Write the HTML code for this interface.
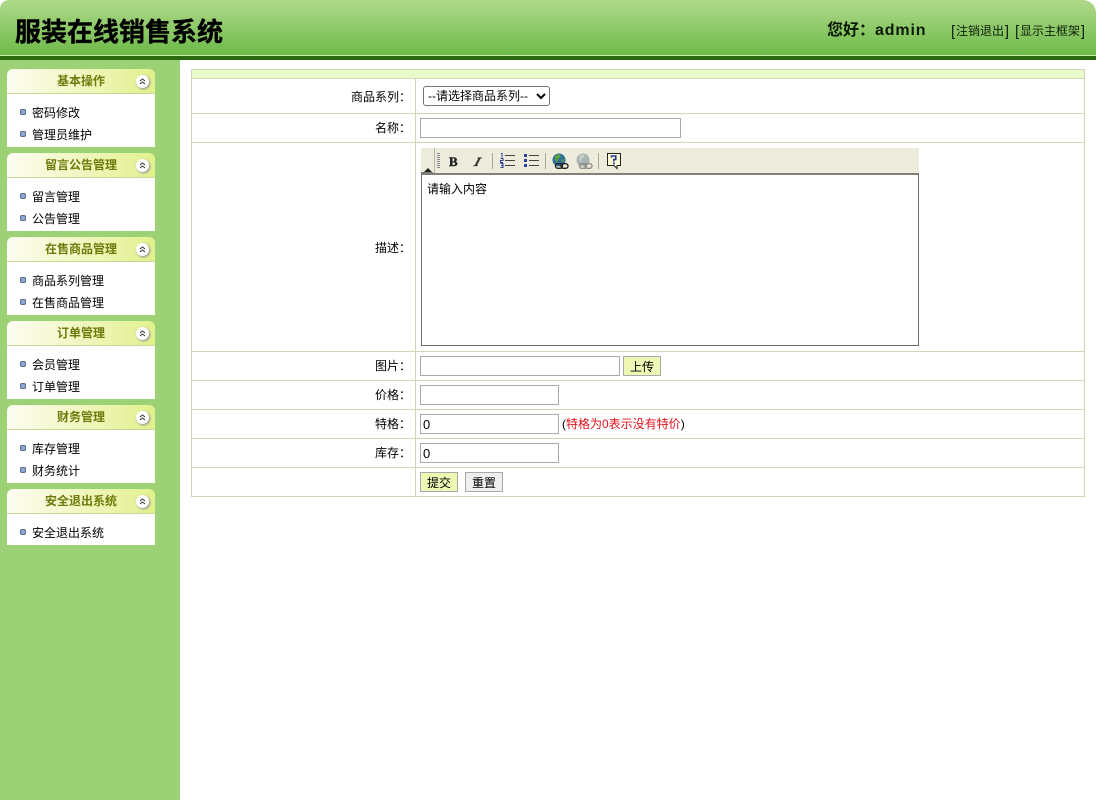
<!DOCTYPE html>
<html>
<head>
<meta charset="utf-8">
<style>
html,body{margin:0;padding:0;width:1096px;height:800px;overflow:hidden;background:#fff;font-family:"Liberation Sans","Noto Sans CJK SC",sans-serif;font-size:12px;color:#000}
div,span,input,select,button{box-sizing:border-box}
.a{position:absolute;white-space:nowrap}
#head{position:absolute;left:0;top:0;width:1096px;height:55px;background:linear-gradient(#b0d98a,#6dba49);border-radius:9px 13px 0 0}
#sb{position:absolute;left:0;top:60px;width:180px;height:740px;background:#9cd175}
.ph{position:absolute;left:7px;width:148px;height:25px;background:linear-gradient(90deg,#fdfdf2,#e2f08c);border-radius:6px 6px 0 0;border-bottom:1px solid #c9d69a;text-align:center;font-weight:bold;font-size:12px;line-height:25px;color:#6f7a0c}
.ph span{position:absolute;left:0;right:0;top:0}
.ph i{position:absolute;left:129px;top:6px;width:13px;height:13px;border-radius:50%;background:#fff;box-shadow:1px 1px 2px #889}
.ph svg{position:absolute;left:132px;top:9px}
.pb{position:absolute;left:7px;width:148px;background:#fff}
.it{position:absolute;left:32px;font-size:12px;line-height:16px;white-space:nowrap}
.bu{position:absolute;left:20px;width:6px;height:6px;background:#8ea8d8;border:1px solid #566a8a;border-radius:2px}
.h{position:absolute;left:191px;width:894px;height:1px;background:#d2d6b4}
.v{position:absolute;width:1px;background:#d2d6b4}
.lb{position:absolute;left:192px;width:219px;text-align:right;font-size:12px;line-height:16px}
input.t{position:absolute;height:20px;border:1px solid #a9a9a9;background:#fff;font:13px "Liberation Sans",sans-serif;padding:1px 2px;margin:0;color:#000;border-radius:0;outline:0}
.btn{position:absolute;height:20px;border:1px solid #a9a9a9;font-size:12px;line-height:20px;text-align:center}
.sep{position:absolute;top:153px;width:1px;height:16px;background:#a8a890}
.br{font-size:15px;display:inline-block;line-height:15px;vertical-align:-1px;font-weight:normal}
</style>
</head>
<body>
<div id="head"></div>
<div class="a" style="left:0;top:55px;width:1096px;height:1px;background:#c8e8a8"></div>
<div class="a" style="left:0;top:56px;width:1096px;height:4px;background:#2a6a0e"></div>
<div class="a" style="left:15px;top:14px;font-size:26px;line-height:36px;font-weight:bold;color:#000;-webkit-text-stroke:.4px #000">服装在线销售系统</div>
<div class="a" style="left:827px;top:20px;font-size:16px;line-height:22px;font-weight:bold;color:#0b1a05">您好：<span style="letter-spacing:.85px">admin</span></div>
<div class="a" style="left:951px;top:22px;font-size:12px;line-height:18px;color:#10200a"><span class="br" style="width:5px">[</span>注销退出<span class="br" style="width:5px;text-align:right">]</span></div>
<div class="a" style="left:1015px;top:22px;font-size:12px;line-height:18px;color:#10200a"><span class="br" style="width:5px">[</span>显示主框架<span class="br" style="width:5px;text-align:right">]</span></div>

<div id="sb"></div>

<div class="ph" style="top:69px"><span>基本操作</span><i></i><svg width="7" height="7" viewBox="0 0 7 7"><path d="M1 3L3.5 1L6 3M1 6L3.5 4L6 6" fill="none" stroke="#333" stroke-width="1"/></svg></div>
<div class="pb" style="top:94px;height:53px"></div>
<div class="bu" style="top:109px"></div><div class="it" style="top:105px">密码修改</div>
<div class="bu" style="top:131px"></div><div class="it" style="top:127px">管理员维护</div>

<div class="ph" style="top:153px"><span>留言公告管理</span><i></i><svg width="7" height="7" viewBox="0 0 7 7"><path d="M1 3L3.5 1L6 3M1 6L3.5 4L6 6" fill="none" stroke="#333" stroke-width="1"/></svg></div>
<div class="pb" style="top:178px;height:53px"></div>
<div class="bu" style="top:193px"></div><div class="it" style="top:189px">留言管理</div>
<div class="bu" style="top:215px"></div><div class="it" style="top:211px">公告管理</div>

<div class="ph" style="top:237px"><span>在售商品管理</span><i></i><svg width="7" height="7" viewBox="0 0 7 7"><path d="M1 3L3.5 1L6 3M1 6L3.5 4L6 6" fill="none" stroke="#333" stroke-width="1"/></svg></div>
<div class="pb" style="top:262px;height:53px"></div>
<div class="bu" style="top:277px"></div><div class="it" style="top:273px">商品系列管理</div>
<div class="bu" style="top:299px"></div><div class="it" style="top:295px">在售商品管理</div>

<div class="ph" style="top:321px"><span>订单管理</span><i></i><svg width="7" height="7" viewBox="0 0 7 7"><path d="M1 3L3.5 1L6 3M1 6L3.5 4L6 6" fill="none" stroke="#333" stroke-width="1"/></svg></div>
<div class="pb" style="top:346px;height:53px"></div>
<div class="bu" style="top:361px"></div><div class="it" style="top:357px">会员管理</div>
<div class="bu" style="top:383px"></div><div class="it" style="top:379px">订单管理</div>

<div class="ph" style="top:405px"><span>财务管理</span><i></i><svg width="7" height="7" viewBox="0 0 7 7"><path d="M1 3L3.5 1L6 3M1 6L3.5 4L6 6" fill="none" stroke="#333" stroke-width="1"/></svg></div>
<div class="pb" style="top:430px;height:53px"></div>
<div class="bu" style="top:445px"></div><div class="it" style="top:441px">库存管理</div>
<div class="bu" style="top:467px"></div><div class="it" style="top:463px">财务统计</div>

<div class="ph" style="top:489px"><span>安全退出系统</span><i></i><svg width="7" height="7" viewBox="0 0 7 7"><path d="M1 3L3.5 1L6 3M1 6L3.5 4L6 6" fill="none" stroke="#333" stroke-width="1"/></svg></div>
<div class="pb" style="top:514px;height:31px"></div>
<div class="bu" style="top:529px"></div><div class="it" style="top:525px">安全退出系统</div>

<!-- table -->
<div class="a" style="left:191px;top:69px;width:894px;height:9px;background:#e9fbcd"></div>
<div class="h" style="top:69px"></div>
<div class="h" style="top:78px"></div>
<div class="h" style="top:113px"></div>
<div class="h" style="top:142px"></div>
<div class="h" style="top:351px"></div>
<div class="h" style="top:380px"></div>
<div class="h" style="top:409px"></div>
<div class="h" style="top:438px"></div>
<div class="h" style="top:467px"></div>
<div class="h" style="top:496px"></div>
<div class="v" style="left:191px;top:69px;height:428px"></div>
<div class="v" style="left:1084px;top:69px;height:428px"></div>
<div class="v" style="left:415px;top:78px;height:419px"></div>

<div class="lb" style="top:89px">商品系列：</div>
<div class="lb" style="top:120px">名称：</div>
<div class="lb" style="top:240px">描述：</div>
<div class="lb" style="top:358px">图片：</div>
<div class="lb" style="top:387px">价格：</div>
<div class="lb" style="top:416px">特格：</div>
<div class="lb" style="top:445px">库存：</div>

<select style="position:absolute;left:423px;top:86px;width:127px;height:20px;font:12px 'Liberation Sans','Noto Sans CJK SC',sans-serif;background:#fff;border:1px solid #767676;border-radius:3px;padding:0;color:#000"><option>--请选择商品系列--</option></select>
<input class="t" style="left:420px;top:118px;width:261px">

<!-- editor -->
<div class="a" style="left:421px;top:148px;width:498px;height:26px;background:#ecebdc"></div>
<div class="a" style="left:421px;top:173px;width:498px;height:173px;border:1px solid #6e6e6e;border-top:2px solid #808078;background:#fff"></div>
<div class="a" style="left:424px;top:168px;width:0;height:0;border-left:4px solid transparent;border-right:4px solid transparent;border-bottom:4px solid #222"></div>
<div class="a" style="left:421px;top:172px;width:12px;height:1px;background:#777"></div>
<div class="a" style="left:434px;top:148px;width:1px;height:25px;background:#b8b8a8"></div>
<div class="a" style="left:437px;top:153px;width:3px;height:16px;background:repeating-linear-gradient(#888 0 1px,#ecebdc 1px 2px)"></div>
<div class="a" style="left:449px;top:153px;font:bold 13px/18px 'Liberation Serif',serif;color:#222;-webkit-text-stroke:.4px #222">B</div>
<div class="a" style="left:475px;top:153px;font:bold 13px/18px 'Liberation Serif',serif;color:#333;transform:skewX(-28deg);-webkit-text-stroke:.3px #333">I</div>
<div class="sep" style="left:492px"></div>
<svg class="a" style="left:500px;top:153px" width="15" height="15" viewBox="0 0 15 15"><path d="M5 2.5H15M5 7.5H15M5 12.5H15" stroke="#444" stroke-width="1"/><path d="M1 0.5H2V4.5M0.5 5.5H3V7.5H0.5V9.5H3M0.5 10.5H3V14.5H0.5M1 12.5H3" fill="none" stroke="#2a3f9a" stroke-width="1"/></svg>
<svg class="a" style="left:524px;top:153px" width="15" height="15" viewBox="0 0 15 15"><path d="M5 2.5H15M5 7.5H15M5 12.5H15" stroke="#444" stroke-width="1"/><path d="M0 1h3v3H0zM0 6h3v3H0zM0 11h3v3H0z" fill="#2a3f9a"/></svg>
<div class="sep" style="left:545px"></div>
<svg class="a" style="left:551px;top:152px" width="18" height="18" viewBox="0 0 18 18"><circle cx="8" cy="8" r="6.5" fill="#2f6f9a"/><path d="M4 4l4-2 2 3-3 2-1 4-2-3zM10 8l3-1-1 4z" fill="#5aa03a"/><g fill="none" stroke="#222" stroke-width="1.4"><rect x="4.5" y="11.7" width="7" height="4.6" rx="2.2"/><rect x="10" y="11.7" width="7" height="4.6" rx="2.2"/></g></svg>
<svg class="a" style="left:575px;top:152px" width="18" height="18" viewBox="0 0 18 18"><circle cx="8" cy="8" r="6.5" fill="#a6b2b4"/><path d="M4 4l4-2 2 3-3 2-1 4-2-3z" fill="#c4cebc"/><g fill="none" stroke="#8c8c84" stroke-width="1.4"><rect x="4.5" y="11.7" width="7" height="4.6" rx="2.2"/><rect x="10" y="11.7" width="7" height="4.6" rx="2.2"/></g></svg>
<div class="sep" style="left:598px"></div>
<svg class="a" style="left:606px;top:152px" width="16" height="18" viewBox="0 0 16 18"><path d="M1.5 1.5H14.5V13.5H11V16.5L8 13.5H1.5Z" fill="#fffbd8" stroke="#222" stroke-width="1"/><path d="M5.5 5.5V4H9.8V7.5H7.8V9.5" fill="none" stroke="#223a88" stroke-width="1.6"/><path d="M7 10.5H8.8V12.3H7Z" fill="#223a88"/></svg>
<div class="a" style="left:427px;top:181px;font-size:12px;line-height:16px">请输入内容</div>

<input class="t" style="left:420px;top:356px;width:200px">
<div class="btn" style="left:623px;top:356px;width:38px;background:#eef7b4">上传</div>
<input class="t" style="left:420px;top:385px;width:139px">
<input class="t" value="0" style="left:420px;top:414px;width:139px">
<div class="a" style="left:562px;top:416px;font-size:12px;line-height:16px">(<span style="color:#e0101a">特格为0表示没有特价</span>)</div>
<input class="t" value="0" style="left:420px;top:443px;width:139px">
<div class="btn" style="left:420px;top:472px;width:38px;background:#eef7b4">提交</div>
<div class="btn" style="left:465px;top:472px;width:38px;background:#efefef">重置</div>
</body>
</html>
